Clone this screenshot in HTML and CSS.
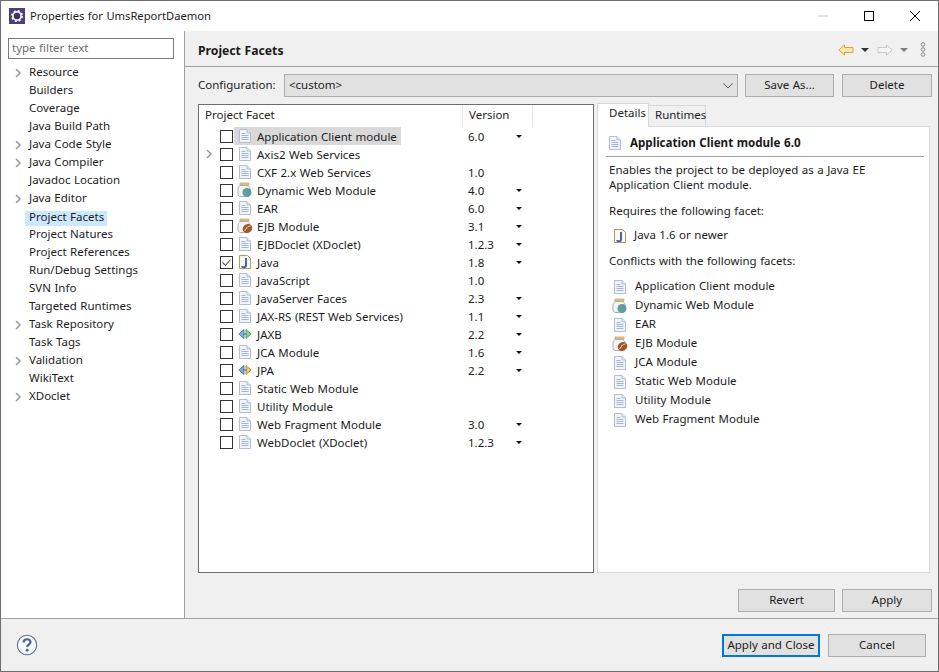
FILE: index.html
```html
<!DOCTYPE html>
<html lang="en">
<head>
<meta charset="utf-8">
<title>Properties for UmsReportDaemon</title>
<link rel="stylesheet" href="styles.css">
</head>
<body>
<svg class="defs" width="0" height="0" aria-hidden="true">
  <symbol id="doc" viewBox="0 0 12 14">
    <path d="M.5.5h7.500l3.500 3.500v9.500h-11z" fill="#f1f4fa" stroke="#b3bed0"/>
    <path d="M8 .5v3.500h3.500" fill="#e3e8f1" stroke="#b3bed0"/>
    <path d="M2.500 4.500h4M2.500 6.500h7M2.500 8.500h7M2.500 10.500h7" stroke="#a2b5d4"/>
  </symbol>
  <symbol id="java" viewBox="0 0 12 14">
    <path d="M.5.5h8l3 3v10h-11z" fill="#fbf8ee" stroke="#b49a62"/>
    <path d="M7 3v7.500c0 1.200-1 1.700-2 1.700s-1.800-.6-1.800-1.300" fill="none" stroke="#3f67b5" stroke-width="2"/>
  </symbol>
  <symbol id="jar-web" viewBox="0 0 16 16">
    <path d="M3 1h9v2H3z" fill="#e6c777" stroke="#c4a968" stroke-width=".8"/>
    <path d="M3 3.500C1 5 1 6 1 9v3c0 1.500 1 2.500 3 2.500h6c2 0 3-1 3-2.500V9c0-3 0-4-2-5.500z" fill="#f2f4f7" stroke="#a6b0bc"/>
    <circle cx="10" cy="10.500" r="4.500" fill="#5a97c9"/>
    <path d="M7 9c1-2 3-2.500 4-1.500s-1 1.500-1 3 1 2 0 3-3 0-3-2 .5-1 0-2.500z" fill="#6aa664"/>
  </symbol>
  <symbol id="jar-ejb" viewBox="0 0 16 16">
    <path d="M3 1h9v2H3z" fill="#e6c777" stroke="#c4a968" stroke-width=".8"/>
    <path d="M3 3.500C1 5 1 6 1 9v3c0 1.500 1 2.500 3 2.500h6c2 0 3-1 3-2.500V9c0-3 0-4-2-5.500z" fill="#f2f4f7" stroke="#a6b0bc"/>
    <ellipse cx="10.500" cy="10.500" rx="5" ry="4.300" transform="rotate(-35 10.500 10.500)" fill="#a0592a"/>
    <path d="M7.500 13c1.500-1 1.500-3 3-4s2-.8 3-1" fill="none" stroke="#f0d8b8"/>
  </symbol>
  <symbol id="arrows-green" viewBox="0 0 14 10">
    <path d="M6 .5v9L.8 5z" fill="#7fb0dd" stroke="#2f6aa6" stroke-width=".8"/>
    <path d="M8 .5v9L13.200 5z" fill="#86d58f" stroke="#2e9a45" stroke-width=".8"/>
    <path d="M5 5h4" stroke="#4a6d8c"/>
  </symbol>
  <symbol id="arrows-orange" viewBox="0 0 14 10">
    <path d="M6 .5v9L.8 5z" fill="#7fb0dd" stroke="#2f6aa6" stroke-width=".8"/>
    <path d="M8 .5v9L13.200 5z" fill="#efc27a" stroke="#b57a23" stroke-width=".8"/>
    <path d="M5 5h4" stroke="#6d6a5a"/>
  </symbol>
  <symbol id="chev" viewBox="0 0 7 10">
    <path d="M1 1l4 4-4 4" fill="none" stroke="#9a9a9a" stroke-width="1.500"/>
  </symbol>
</svg>

<div class="window">
  <header class="titlebar">
    <svg class="app-icon" viewBox="0 0 16 16" aria-hidden="true">
      <rect width="16" height="16" fill="#4a3f78"/>
      <circle cx="8" cy="8" r="5" fill="#e8e8ee"/>
      <circle cx="8" cy="8" r="5.200" fill="none" stroke="#fff" stroke-width="1.600" stroke-dasharray="2 2.100"/>
      <circle cx="8" cy="8" r="3.200" fill="#3a3560"/>
    </svg>
    <span class="title-text">Properties for UmsReportDaemon</span>
    <div class="win-controls">
      <svg class="win-btn" viewBox="0 0 12 12" aria-hidden="true"><path d="M1 6h10" stroke="#c8c8c8"/></svg>
      <svg class="win-btn" viewBox="0 0 12 12" aria-hidden="true"><rect x="1.500" y="1.500" width="9" height="9" fill="none" stroke="#000"/></svg>
      <svg class="win-btn" viewBox="0 0 12 12" aria-hidden="true"><path d="M1 1l10 10M11 1L1 11" stroke="#000"/></svg>
    </div>
  </header>

  <div class="main">
    <aside class="sidebar">
      <div class="filter">type filter text</div>
      <ul class="tree">
        <li class="tree-row"><svg class="chev"><use href="#chev"/></svg><span>Resource</span></li>
        <li class="tree-row"><span class="chev"></span><span>Builders</span></li>
        <li class="tree-row"><span class="chev"></span><span>Coverage</span></li>
        <li class="tree-row"><span class="chev"></span><span>Java Build Path</span></li>
        <li class="tree-row"><svg class="chev"><use href="#chev"/></svg><span>Java Code Style</span></li>
        <li class="tree-row"><svg class="chev"><use href="#chev"/></svg><span>Java Compiler</span></li>
        <li class="tree-row"><span class="chev"></span><span>Javadoc Location</span></li>
        <li class="tree-row"><svg class="chev"><use href="#chev"/></svg><span>Java Editor</span></li>
        <li class="tree-row"><span class="chev"></span><span class="tree-selected">Project Facets</span></li>
        <li class="tree-row"><span class="chev"></span><span>Project Natures</span></li>
        <li class="tree-row"><span class="chev"></span><span>Project References</span></li>
        <li class="tree-row"><span class="chev"></span><span>Run/Debug Settings</span></li>
        <li class="tree-row"><span class="chev"></span><span>SVN Info</span></li>
        <li class="tree-row"><span class="chev"></span><span>Targeted Runtimes</span></li>
        <li class="tree-row"><svg class="chev"><use href="#chev"/></svg><span>Task Repository</span></li>
        <li class="tree-row"><span class="chev"></span><span>Task Tags</span></li>
        <li class="tree-row"><svg class="chev"><use href="#chev"/></svg><span>Validation</span></li>
        <li class="tree-row"><span class="chev"></span><span>WikiText</span></li>
        <li class="tree-row"><svg class="chev"><use href="#chev"/></svg><span>XDoclet</span></li>
      </ul>
    </aside>

    <section class="content">
      <div class="content-head">
        <h1 class="page-title">Project Facets</h1>
        <div class="nav-tools">
          <svg class="nav-arrow" viewBox="0 0 16 12" aria-hidden="true"><path d="M.8 6L6.500 1v2.500h8.500v5H6.500V11z" fill="#fbe7a8" stroke="#d9a441"/></svg>
          <span class="tri"></span>
          <svg class="nav-arrow nav-next" viewBox="0 0 16 12" aria-hidden="true"><path d="M15.200 6L9.500 1v2.500H1v5h8.500V11z" fill="#f6f6f6" stroke="#c8c8c8"/></svg>
          <span class="tri tri-dim"></span>
          <svg class="nav-dots" viewBox="0 0 6 15" aria-hidden="true"><g fill="none" stroke="#8a8a8a"><circle cx="3" cy="2.500" r="1.800"/><circle cx="3" cy="7.500" r="1.800"/><circle cx="3" cy="12.500" r="1.800"/></g></svg>
        </div>
      </div>

      <div class="content-body">
        <div class="config">
          <span class="config-label">Configuration:</span>
          <div class="combo"><span class="combo-text">&lt;custom&gt;</span>
            <svg class="combo-arrow" viewBox="0 0 10 6" aria-hidden="true"><path d="M.5.5L5 5 9.500.5" fill="none" stroke="#555"/></svg>
          </div>
          <button class="btn btn-save">Save As...</button>
          <button class="btn btn-delete">Delete</button>
        </div>

        <div class="split">
          <div class="facets">
            <div class="facets-head">
              <span class="col-facet">Project Facet</span>
              <span class="col-version">Version</span>
            </div>
            <div class="frow">
              <span class="exp"></span><span class="cb"></span>
              <span class="fsel"><svg class="ic"><use href="#doc"/></svg><span class="fname">Application Client module</span></span>
              <span class="fver">6.0</span><span class="ftri"></span>
            </div>
            <div class="frow">
              <svg class="exp"><use href="#chev"/></svg><span class="cb"></span>
              <svg class="ic"><use href="#doc"/></svg><span class="fname">Axis2 Web Services</span>
              <span class="fver"></span><span class="ftri ftri-none"></span>
            </div>
            <div class="frow">
              <span class="exp"></span><span class="cb"></span>
              <svg class="ic"><use href="#doc"/></svg><span class="fname">CXF 2.x Web Services</span>
              <span class="fver">1.0</span><span class="ftri ftri-none"></span>
            </div>
            <div class="frow">
              <span class="exp"></span><span class="cb"></span>
              <svg class="ic ic-jar"><use href="#jar-web"/></svg><span class="fname">Dynamic Web Module</span>
              <span class="fver">4.0</span><span class="ftri"></span>
            </div>
            <div class="frow">
              <span class="exp"></span><span class="cb"></span>
              <svg class="ic"><use href="#doc"/></svg><span class="fname">EAR</span>
              <span class="fver">6.0</span><span class="ftri"></span>
            </div>
            <div class="frow">
              <span class="exp"></span><span class="cb"></span>
              <svg class="ic ic-jar"><use href="#jar-ejb"/></svg><span class="fname">EJB Module</span>
              <span class="fver">3.1</span><span class="ftri"></span>
            </div>
            <div class="frow">
              <span class="exp"></span><span class="cb"></span>
              <svg class="ic"><use href="#doc"/></svg><span class="fname">EJBDoclet (XDoclet)</span>
              <span class="fver">1.2.3</span><span class="ftri"></span>
            </div>
            <div class="frow">
              <span class="exp"></span>
              <span class="cb"><svg class="check" viewBox="0 0 11 11" aria-hidden="true"><path d="M1.500 5.500l3 3 5-6" fill="none" stroke="#555" stroke-width="1.100"/></svg></span>
              <svg class="ic"><use href="#java"/></svg><span class="fname">Java</span>
              <span class="fver">1.8</span><span class="ftri"></span>
            </div>
            <div class="frow">
              <span class="exp"></span><span class="cb"></span>
              <svg class="ic"><use href="#doc"/></svg><span class="fname">JavaScript</span>
              <span class="fver">1.0</span><span class="ftri ftri-none"></span>
            </div>
            <div class="frow">
              <span class="exp"></span><span class="cb"></span>
              <svg class="ic"><use href="#doc"/></svg><span class="fname">JavaServer Faces</span>
              <span class="fver">2.3</span><span class="ftri"></span>
            </div>
            <div class="frow">
              <span class="exp"></span><span class="cb"></span>
              <svg class="ic"><use href="#doc"/></svg><span class="fname">JAX-RS (REST Web Services)</span>
              <span class="fver">1.1</span><span class="ftri"></span>
            </div>
            <div class="frow">
              <span class="exp"></span><span class="cb"></span>
              <svg class="ic ic-arrows"><use href="#arrows-green"/></svg><span class="fname">JAXB</span>
              <span class="fver">2.2</span><span class="ftri"></span>
            </div>
            <div class="frow">
              <span class="exp"></span><span class="cb"></span>
              <svg class="ic"><use href="#doc"/></svg><span class="fname">JCA Module</span>
              <span class="fver">1.6</span><span class="ftri"></span>
            </div>
            <div class="frow">
              <span class="exp"></span><span class="cb"></span>
              <svg class="ic ic-arrows"><use href="#arrows-orange"/></svg><span class="fname">JPA</span>
              <span class="fver">2.2</span><span class="ftri"></span>
            </div>
            <div class="frow">
              <span class="exp"></span><span class="cb"></span>
              <svg class="ic"><use href="#doc"/></svg><span class="fname">Static Web Module</span>
              <span class="fver"></span><span class="ftri ftri-none"></span>
            </div>
            <div class="frow">
              <span class="exp"></span><span class="cb"></span>
              <svg class="ic"><use href="#doc"/></svg><span class="fname">Utility Module</span>
              <span class="fver"></span><span class="ftri ftri-none"></span>
            </div>
            <div class="frow">
              <span class="exp"></span><span class="cb"></span>
              <svg class="ic"><use href="#doc"/></svg><span class="fname">Web Fragment Module</span>
              <span class="fver">3.0</span><span class="ftri"></span>
            </div>
            <div class="frow">
              <span class="exp"></span><span class="cb"></span>
              <svg class="ic"><use href="#doc"/></svg><span class="fname">WebDoclet (XDoclet)</span>
              <span class="fver">1.2.3</span><span class="ftri"></span>
            </div>
          </div>

          <div class="details">
            <div class="tabs">
              <span class="tab tab-active">Details</span>
              <span class="tab">Runtimes</span>
            </div>
            <div class="tab-panel">
              <div class="detail-title">
                <svg class="ic"><use href="#doc"/></svg>
                <strong>Application Client module 6.0</strong>
              </div>
              <p class="d-desc">Enables the project to be deployed as a Java EE<br>Application Client module.</p>
              <p class="d-req">Requires the following facet:</p>
              <div class="d-row d-row-first"><svg class="ic"><use href="#java"/></svg><span>Java 1.6 or newer</span></div>
              <p class="d-conf">Conflicts with the following facets:</p>
              <div class="d-list">
                <div class="d-row"><svg class="ic"><use href="#doc"/></svg><span>Application Client module</span></div>
                <div class="d-row"><svg class="ic ic-jar"><use href="#jar-web"/></svg><span>Dynamic Web Module</span></div>
                <div class="d-row"><svg class="ic"><use href="#doc"/></svg><span>EAR</span></div>
                <div class="d-row"><svg class="ic ic-jar"><use href="#jar-ejb"/></svg><span>EJB Module</span></div>
                <div class="d-row"><svg class="ic"><use href="#doc"/></svg><span>JCA Module</span></div>
                <div class="d-row"><svg class="ic"><use href="#doc"/></svg><span>Static Web Module</span></div>
                <div class="d-row"><svg class="ic"><use href="#doc"/></svg><span>Utility Module</span></div>
                <div class="d-row"><svg class="ic"><use href="#doc"/></svg><span>Web Fragment Module</span></div>
              </div>
            </div>
          </div>
        </div>

        <div class="page-actions">
          <button class="btn btn-revert">Revert</button>
          <button class="btn btn-apply">Apply</button>
        </div>
      </div>
    </section>
  </div>

  <footer class="footer">
    <svg class="help" viewBox="0 0 22 22" aria-hidden="true">
      <circle cx="11" cy="11" r="9.700" fill="#f6f7f9" stroke="#5f7190" stroke-width="1.100"/>
      <path d="M7.600 8.400c0-2 1.500-3.200 3.500-3.200s3.400 1.100 3.400 2.900c0 2.600-3.300 2.500-3.300 5" fill="none" stroke="#4d6285" stroke-width="2.100"/>
      <circle cx="11.200" cy="16.200" r="1.400" fill="#4d6285"/>
    </svg>
    <div class="footer-actions">
      <button class="btn btn-primary">Apply and Close</button>
      <button class="btn btn-cancel">Cancel</button>
    </div>
  </footer>
</div>
</body>
</html>
```

FILE: styles.css
```css
* { box-sizing: border-box; }

html, body { margin: 0; padding: 0; }

body {
  font-family: "Noto Sans", "Open Sans", sans-serif;
  font-size: 11.5px;
  word-spacing: 0.5px;
  color: #1c1c1c;
  background: #f0f0f0;
}

.defs { display: block; width: 0; height: 0; overflow: hidden; }

.window {
  width: 939px;
  height: 672px;
  display: flex;
  flex-direction: column;
  border: 1px solid #6e6e6e;
  background: #f0f0f0;
}

.titlebar {
  height: 30px;
  flex: none;
  display: flex;
  align-items: center;
  background: #fff;
  padding-left: 8px;
}

.app-icon { width: 16px; height: 16px; flex: none; }
.title-text { margin-left: 5px; margin-bottom: 1px; font-size: 11.2px; }

.win-controls { margin-left: auto; display: flex; margin-right: 17px; gap: 34px; }
.win-btn { width: 12px; height: 12px; display: block; }

.main { flex: 1; display: flex; min-height: 0; }

.sidebar {
  width: 184px;
  flex: none;
  background: #fff;
  border-right: 1px solid #a0a0a0;
  padding: 7px 0 0 7px;
}

.filter {
  width: 166px;
  height: 21px;
  border: 1px solid #7a7a7a;
  line-height: 17px;
  padding-left: 3px;
  color: #6d6d6d;
}

.tree { list-style: none; margin: 5px 0 0; padding: 0; }

.tree-row { height: 18px; display: flex; align-items: center; line-height: 18px; }

.tree-row span { margin-bottom: 2px; }

.chev { width: 7px; height: 10px; margin: 0 7px 0 7px; flex: none; display: block; }

.tree-row .tree-selected {
  background: #cce8ff;
  width: 82px;
  margin: 3px 0 0 -4px;
  padding: 0 0 3px 4px;
  line-height: 12px;
}

.content { flex: 1; min-width: 0; display: flex; flex-direction: column; }

.content-head {
  height: 36px;
  flex: none;
  display: flex;
  align-items: center;
  padding: 2px 13px 0;
  border-bottom: 1px solid #a0a0a0;
}

.page-title { margin: 2px 0 0; font-size: 12.200px; font-weight: 700; color: #1a1a1a; }

.nav-tools { margin-left: auto; display: flex; align-items: center; margin-right: -1px; }
.nav-arrow { width: 16px; height: 12px; display: block; }
.nav-next { margin-left: 8px; }
.tri {
  width: 0; height: 0;
  margin-left: 7px;
  border-left: 4px solid transparent;
  border-right: 4px solid transparent;
  border-top: 4px solid #333;
}
.tri-dim { border-top-color: #7f7f7f; }
.nav-dots { width: 6px; height: 15px; margin-left: 12px; display: block; }

.content-body {
  flex: 1;
  min-height: 0;
  display: flex;
  flex-direction: column;
  padding: 7px 6px 6px 13px;
}

.config { display: flex; height: 23px; align-items: center; flex: none; }
.config-label { width: 86px; flex: none; margin-bottom: 2px; }

.combo {
  width: 454px;
  height: 23px;
  flex: none;
  display: flex;
  align-items: center;
  justify-content: space-between;
  background: #e1e1e1;
  border: 1px solid #adadad;
  padding: 0 4px;
}
.combo-text { margin-bottom: 2px; }
.combo-arrow { width: 10px; height: 6px; display: block; }

.btn {
  height: 23px;
  font: inherit;
  word-spacing: inherit;
  color: inherit;
  background: #e1e1e1;
  border: 1px solid #adadad;
  padding: 0 0 2px;
  flex: none;
}

.btn-save { width: 89px; margin-left: 7px; }
.btn-delete { width: 90px; margin-left: 8px; }

.split { height: 469px; flex: none; display: flex; margin-top: 7px; }

.facets {
  width: 396px;
  flex: none;
  background: #fff;
  border: 1px solid #6e6e6e;
}

.facets-head { height: 22px; display: flex; align-items: flex-start; }
.col-facet { width: 264px; height: 22px; padding-left: 6px; line-height: 19px; border-right: 1px solid #e5e5e5; }
.col-version { width: 70px; height: 22px; padding-left: 6px; line-height: 19px; border-right: 1px solid #e5e5e5; }

.frow { height: 18px; display: flex; align-items: center; }

.exp { width: 7px; height: 10px; margin: 0 7px 0 7px; flex: none; display: block; }

.cb {
  width: 13px;
  height: 13px;
  flex: none;
  border: 1px solid #333;
  background: #fff;
  display: flex;
  align-items: center;
  justify-content: center;
}
.check { width: 11px; height: 11px; display: block; }

.ic { width: 12px; height: 14px; margin: 0 6px 0 6px; flex: none; display: block; }
.ic-jar { width: 16px; height: 16px; margin: 0 4px 0 4px; }
.ic-arrows { width: 14px; height: 10px; margin: 0 5px 0 5px; }

.fsel {
  display: flex;
  align-items: center;
  width: 167px;
  height: 18px;
  background: #d9d9d9;
  flex: none;
  margin-left: 1px;
}
.fsel .ic { margin-left: 5px; }

.fname { white-space: nowrap; }

.fver { margin-left: auto; width: 48px; flex: none; }

.ftri {
  width: 0; height: 0;
  flex: none;
  margin-right: 71px;
  border-left: 3px solid transparent;
  border-right: 3px solid transparent;
  border-top: 3px solid #111;
}
.ftri-none { border-top-color: transparent; }

.details { width: 333px; margin-left: 3px; flex: none; display: flex; flex-direction: column; margin-top: -1px; }

.tabs { display: flex; align-items: flex-end; height: 23px; flex: none; position: relative; z-index: 1; }

.tab {
  height: 21px;
  width: 57px;
  border: 1px solid #d9d9d9;
  border-bottom: 0;
  border-left: 0;
  padding-left: 6px;
  line-height: 18px;
  background: #f0f0f0;
}
.tab-active {
  height: 24px;
  width: 52px;
  margin-bottom: -1px;
  padding-left: 11px;
  background: #fff;
  border-left: 1px solid #d9d9d9;
  line-height: 18px;
}

.tab-panel { flex: 1; background: #fff; border: 1px solid #d9d9d9; padding: 0 5px 0 8px; }

.detail-title {
  height: 30px;
  display: flex;
  align-items: center;
  border-bottom: 1px solid #a0a0a0;
}
.detail-title .ic { margin: 2px 9px 0 3px; }
.detail-title strong { margin-top: 2px; font-size: 11.600px; font-weight: 700; color: #1a1a1a; }

.d-desc, .d-req, .d-conf { margin: 0 0 0 3px; line-height: 15px; }
.d-desc { margin-top: 5px; }
.d-req { margin-top: 11px; }
.d-conf { margin-top: 8px; }

.d-row { height: 19px; display: flex; align-items: center; padding-left: 8px; }
.d-row span { margin-bottom: 2px; }
.d-row .ic { margin: 0 9px 0 0; }
.d-row .ic-jar { margin: 0 7px 0 -2px; }
.d-row-first { margin-top: 8px; }
.d-row-first .ic { margin-right: 8px; }
.d-list { margin-top: 9px; }

.page-actions { display: flex; margin-top: 16px; justify-content: flex-end; flex: none; }
.btn-revert { width: 97px; }
.btn-apply { width: 90px; margin-left: 7px; }

.footer {
  height: 53px;
  flex: none;
  border-top: 1px solid #a0a0a0;
  display: flex;
  align-items: center;
  padding: 0 12px 0 15px;
}

.help { width: 22px; height: 22px; display: block; }

.footer-actions { margin-left: auto; display: flex; gap: 8px; }

.btn-primary { width: 98px; border: 2px solid #0078d7; }
.btn-cancel { width: 98px; }
```
